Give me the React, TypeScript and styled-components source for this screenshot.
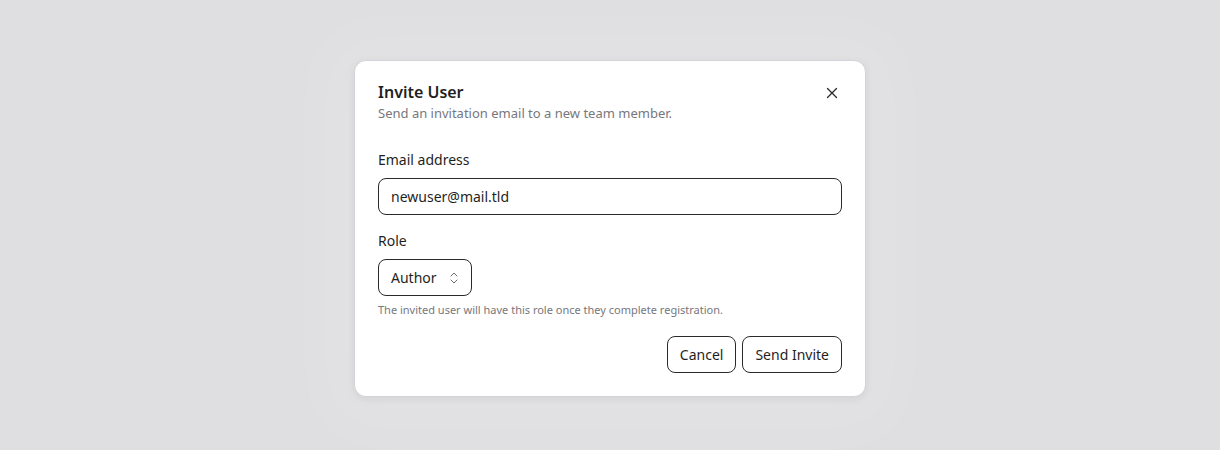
import React from 'react';
import styled, {createGlobalStyle} from 'styled-components';

const GlobalStyle = createGlobalStyle`
  body {
    margin: 0;
    background: #dfdfe1;
    font-family: "Noto Sans", sans-serif;
    color: #1f1f23;
  }
`;

const Page = styled.div`
  height: 450px;
  display: flex;
  justify-content: center;
  padding-top: 60px;
  box-sizing: border-box;
`;

const Dialog = styled.div`
  width: 512px;
  height: 337px;
  box-sizing: border-box;
  background: #fff;
  border: 1px solid #d4d4d8;
  border-radius: 12px;
  box-shadow: 0 4px 60px 30px rgba(255, 255, 255, 0.12), 0 2px 8px rgba(0, 0, 0, 0.08);
  padding: 20px 23px 23px;
  display: flex;
  flex-direction: column;
`;

const Header = styled.div`
  display: flex;
  justify-content: space-between;
  align-items: flex-start;
`;

const Title = styled.h2`
  margin: 0;
  font-size: 16px;
  font-weight: 600;
  line-height: 22px;
`;

const Subtitle = styled.p`
  margin: 1px 0 0;
  font-size: 13px;
  color: #77777d;
  line-height: 18px;
`;

const CloseButton = styled.button`
  border: none;
  background: none;
  padding: 0;
  margin-top: 6px;
  margin-right: 4px;
  display: flex;
  cursor: pointer;
`;

const Field = styled.div<{ $top: number }>`
  margin-top: ${p => p.$top}px;
  display: flex;
  flex-direction: column;
`;

const Label = styled.label`
  font-size: 14px;
  line-height: 20px;
  margin-bottom: 8px;
`;

const Input = styled.input`
  height: 37px;
  box-sizing: border-box;
  border: 1px solid #2a2a2e;
  border-radius: 8px;
  padding: 0 12px;
  font: 14px "Noto Sans", sans-serif;
  color: #1f1f23;
  outline: none;
`;

const Select = styled.button`
  align-self: flex-start;
  height: 37px;
  width: 94px;
  box-sizing: border-box;
  border: 1px solid #2a2a2e;
  border-radius: 8px;
  background: #fff;
  padding: 0 12px;
  display: flex;
  align-items: center;
  justify-content: space-between;
  font: 14px "Noto Sans", sans-serif;
  color: #1f1f23;
`;

const Help = styled.p`
  margin: 6px 0 0;
  font-size: 11px;
  color: #77777d;
  line-height: 16px;
`;

const Footer = styled.div`
  margin-top: auto;
  display: flex;
  justify-content: flex-end;
  gap: 6px;
`;

const Button = styled.button`
  height: 37px;
  box-sizing: border-box;
  border: 1px solid #2a2a2e;
  border-radius: 8px;
  background: #fff;
  padding: 0 12px;
  font: 14px "Noto Sans", sans-serif;
  color: #1f1f23;
`;

export default function App() {
  return (
    <>
      <GlobalStyle />
      <Page>
        <Dialog>
          <Header>
            <div>
              <Title>Invite User</Title>
              <Subtitle>Send an invitation email to a new team member.</Subtitle>
            </div>
            <CloseButton aria-label="close">
              <svg width="12" height="12" viewBox="0 0 12 12" stroke="#2a2a2e" strokeWidth="1.3" strokeLinecap="round">
                <path d="M1.5 1.5l9 9M10.5 1.5l-9 9" />
              </svg>
            </CloseButton>
          </Header>
          <Field $top={28}>
            <Label>Email address</Label>
            <Input defaultValue="newuser@mail.tld" />
          </Field>
          <Field $top={16}>
            <Label>Role</Label>
            <Select>
              Author
              <svg width="10" height="16" viewBox="0 0 10 16" fill="none" stroke="#6b6b70" strokeWidth="1" strokeLinecap="round" strokeLinejoin="round">
                <path d="M2 6l3-3 3 3M2 10l3 3 3-3" />
              </svg>
            </Select>
            <Help>The invited user will have this role once they complete registration.</Help>
          </Field>
          <Footer>
            <Button>Cancel</Button>
            <Button>Send Invite</Button>
          </Footer>
        </Dialog>
      </Page>
    </>
  );
}
